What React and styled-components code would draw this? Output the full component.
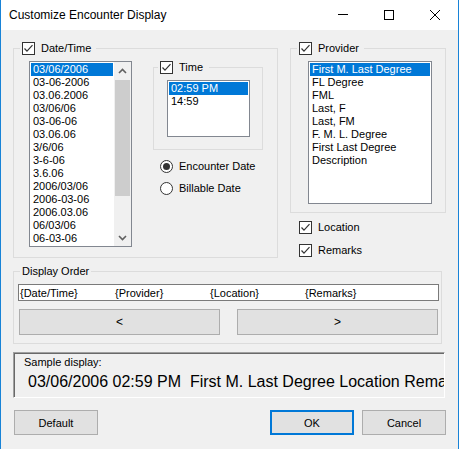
import React from "react";
import styled, { createGlobalStyle } from "styled-components";

const GlobalStyle = createGlobalStyle`
  html, body {
    margin: 0;
    padding: 0;
    background: #f0f0f0;
  }
  body {
    font-family: "Liberation Sans", Arial, sans-serif;
    font-size: 11px;
    color: #000;
  }
`;

const Window = styled.div`
  width: 459px;
  height: 449px;
  box-sizing: border-box;
  border-left: 1px solid #1883d7;
  border-right: 1px solid #1883d7;
  background: #f0f0f0;
  display: flex;
  flex-direction: column;
  overflow: hidden;
`;

const TitleBar = styled.div`
  height: 30px;
  flex-shrink: 0;
  background: #fff;
  display: flex;
  align-items: center;
`;

const Title = styled.div`
  flex: 1;
  padding-left: 8px;
  font-size: 12px;
`;

const CaptionButton = styled.div`
  width: 46px;
  height: 30px;
  display: flex;
  align-items: center;
  justify-content: center;
`;

const Body = styled.div`
  padding: 12px 12px 0 12px;
  display: flex;
  flex-direction: column;
`;

const TopRow = styled.div`
  display: flex;
  gap: 12px;
  height: 216px;
`;

const Group = styled.fieldset`
  margin: ${(p) => p.$mt || 0}px 0 0 0;
  min-width: 0;
  box-sizing: border-box;
  border: 1px solid #dcdcdc;
  width: ${(p) => p.$w}px;
  height: ${(p) => p.$h}px;
  padding: 6px 0 0 0;
`;

const Legend = styled.legend`
  margin-left: ${(p) => (p.$ml !== undefined ? p.$ml : 6)}px;
  padding: 0 ${(p) => p.$pr || 5}px 0 2px;
  height: 13px;
  line-height: 13px;
`;

const GroupInner = styled.div`
  padding-left: ${(p) => p.$pl}px;
`;

const CheckLabel = styled.span`
  display: inline-flex;
  align-items: center;
  gap: 6px;
  height: 13px;
  line-height: 13px;
  white-space: nowrap;
`;

const CheckBox = styled.span`
  width: 13px;
  height: 13px;
  box-sizing: border-box;
  border: 1px solid #333;
  background: #fff;
  display: inline-flex;
  align-items: center;
  justify-content: center;
  flex-shrink: 0;
`;

const RadioCircle = styled.span`
  width: 13px;
  height: 13px;
  box-sizing: border-box;
  border: 1px solid #333;
  border-radius: 50%;
  background: #fff;
  display: inline-flex;
  align-items: center;
  justify-content: center;
  flex-shrink: 0;
`;

const RadioDot = styled.span`
  width: 7px;
  height: 7px;
  border-radius: 50%;
  background: #333;
`;

const ListBox = styled.div`
  width: ${(p) => p.$w}px;
  height: ${(p) => p.$h}px;
  box-sizing: border-box;
  border: 1px solid #828790;
  background: #fff;
  display: flex;
  flex-shrink: 0;
  overflow: hidden;
`;

const ListItems = styled.div`
  flex: 1;
  padding: 1px;
  overflow: hidden;
`;

const ListItem = styled.div`
  height: 13px;
  line-height: 13px;
  padding-left: 2px;
  white-space: nowrap;
  background: ${(p) => (p.$sel ? "#0078d7" : "transparent")};
  color: ${(p) => (p.$sel ? "#fff" : "#000")};
`;

const ScrollBar = styled.div`
  width: 17px;
  flex-shrink: 0;
  background: #f0f0f0;
  display: flex;
  flex-direction: column;
`;

const ScrollArrow = styled.div`
  height: 17px;
  display: flex;
  align-items: center;
  justify-content: center;
`;

const ScrollTrack = styled.div`
  flex: 1;
  padding: 1px 1px 0 1px;
`;

const ScrollThumb = styled.div`
  height: 116px;
  background: #cdcdcd;
`;

const DateContent = styled.div`
  display: flex;
  padding-left: 15px;
  gap: 21px;
`;

const Column = styled.div`
  display: flex;
  flex-direction: column;
`;

const RadioList = styled.div`
  display: flex;
  flex-direction: column;
  gap: 9px;
  margin: 10px 0 0 7px;
`;

const ProviderColumn = styled.div`
  width: 156px;
  display: flex;
  flex-direction: column;
`;

const ChecksBelow = styled.div`
  display: flex;
  flex-direction: column;
  gap: 10px;
  margin: 8px 0 0 9px;
`;

const OrderField = styled.div`
  height: 17px;
  width: 421px;
  box-sizing: border-box;
  border: 1px solid #7a7a7a;
  background: #fff;
  display: flex;
  align-items: center;
  padding-left: 1px;
`;

const OrderToken = styled.span`
  width: 95px;
  flex-shrink: 0;
  white-space: nowrap;
`;

const MoveRow = styled.div`
  display: flex;
  gap: 17px;
  margin: 8px 0 0 1px;
`;

const Button = styled.div`
  box-sizing: border-box;
  width: ${(p) => p.$w}px;
  height: ${(p) => p.$h}px;
  background: #e1e1e1;
  border: ${(p) => (p.$default ? "2px solid #0078d7" : "1px solid #adadad")};
  display: flex;
  align-items: center;
  justify-content: center;
  font-size: ${(p) => p.$fs || 11}px;
`;

const SampleBox = styled.div`
  margin-top: 8px;
  width: 432px;
  height: 46px;
  box-sizing: border-box;
  border: 1px solid;
  border-color: #a0a0a0 #fff #fff #a0a0a0;
  box-shadow: inset 1px 1px 0 #696969;
  overflow: hidden;
`;

const SampleLabel = styled.div`
  margin: 3px 0 0 10px;
  line-height: 13px;
`;

const SampleText = styled.div`
  margin: 4px 0 0 14px;
  font-size: 16px;
  line-height: 18px;
  white-space: nowrap;
  overflow: hidden;
`;

const ButtonRow = styled.div`
  display: flex;
  gap: 8px;
  margin: 12px 0 0 1px;
`;

const Spacer = styled.div`
  flex: 1;
`;

const Check = ({ children }) => (
  <CheckLabel>
    <CheckBox>
      <svg width="11" height="11" viewBox="0 0 11 11">
        <path d="M1.5 5.5 L4 8.2 L9.5 2.2" fill="none" stroke="#333" strokeWidth="1.2" />
      </svg>
    </CheckBox>
    {children}
  </CheckLabel>
);

const Radio = ({ checked, children }) => (
  <CheckLabel>
    <RadioCircle>{checked && <RadioDot />}</RadioCircle>
    {children}
  </CheckLabel>
);

const Chevron = ({ up }) => (
  <svg width="9" height="6" viewBox="0 0 9 6">
    <path
      d={up ? "M1 5 L4.5 1.5 L8 5" : "M1 1 L4.5 4.5 L8 1"}
      fill="none"
      stroke="#606060"
      strokeWidth="1.6"
    />
  </svg>
);

const List = ({ items, w, h, scroll }) => (
  <ListBox $w={w} $h={h}>
    <ListItems>
      {items.map((it, i) => (
        <ListItem key={it} $sel={i === 0}>
          {it}
        </ListItem>
      ))}
    </ListItems>
    {scroll && (
      <ScrollBar>
        <ScrollArrow>
          <Chevron up />
        </ScrollArrow>
        <ScrollTrack>
          <ScrollThumb />
        </ScrollTrack>
        <ScrollArrow>
          <Chevron />
        </ScrollArrow>
      </ScrollBar>
    )}
  </ListBox>
);

const dateFormats = [
  "03/06/2006",
  "03-06-2006",
  "03.06.2006",
  "03/06/06",
  "03-06-06",
  "03.06.06",
  "3/6/06",
  "3-6-06",
  "3.6.06",
  "2006/03/06",
  "2006-03-06",
  "2006.03.06",
  "06/03/06",
  "06-03-06",
];

const timeFormats = ["02:59 PM", "14:59"];

const providerFormats = [
  "First M. Last Degree",
  "FL Degree",
  "FML",
  "Last, F",
  "Last, FM",
  "F. M. L. Degree",
  "First Last Degree",
  "Description",
];

const order = ["{Date/Time}", "{Provider}", "{Location}", "{Remarks}"];

const App = () => {
  return (
    <>
      <GlobalStyle />
      <Window>
        <TitleBar>
          <Title>Customize Encounter Display</Title>
          <CaptionButton>
            <svg width="10" height="10" viewBox="0 0 10 10">
              <line x1="0" y1="4.5" x2="10" y2="4.5" stroke="#000" strokeWidth="1" />
            </svg>
          </CaptionButton>
          <CaptionButton>
            <svg width="10" height="10" viewBox="0 0 10 10">
              <rect x="0.5" y="0.5" width="9" height="9" fill="none" stroke="#000" strokeWidth="1" />
            </svg>
          </CaptionButton>
          <CaptionButton>
            <svg width="10" height="10" viewBox="0 0 10 10">
              <path d="M0 0 L10 10 M10 0 L0 10" stroke="#000" strokeWidth="1" />
            </svg>
          </CaptionButton>
        </TitleBar>

        <Body>
          <TopRow>
            <Group $w={266} $h={216}>
              <Legend>
                <Check>Date/Time</Check>
              </Legend>
              <DateContent>
                <List items={dateFormats} w={103} h={186} scroll />
                <Column>
                  <Group $w={110} $h={89}>
                    <Legend $ml={4} $pr={6}>
                      <Check>Time</Check>
                    </Legend>
                    <GroupInner $pl={13}>
                      <List items={timeFormats} w={83} h={57} />
                    </GroupInner>
                  </Group>
                  <RadioList>
                    <Radio checked>Encounter Date</Radio>
                    <Radio>Billable Date</Radio>
                  </RadioList>
                </Column>
              </DateContent>
            </Group>

            <ProviderColumn>
              <Group $w={156} $h={171}>
                <Legend>
                  <Check>Provider</Check>
                </Legend>
                <GroupInner $pl={17}>
                  <List items={providerFormats} w={124} h={143} />
                </GroupInner>
              </Group>
              <ChecksBelow>
                <Check>Location</Check>
                <Check>Remarks</Check>
              </ChecksBelow>
            </ProviderColumn>
          </TopRow>

          <Group $w={429} $h={79} $mt={7}>
            <Legend $pr={2}>Display Order</Legend>
            <GroupInner $pl={4}>
              <OrderField>
                {order.map((o) => (
                  <OrderToken key={o}>{o}</OrderToken>
                ))}
              </OrderField>
              <MoveRow>
                <Button $w={201} $h={26} $fs={12}>&lt;</Button>
                <Button $w={201} $h={26} $fs={12}>&gt;</Button>
              </MoveRow>
            </GroupInner>
          </Group>

          <SampleBox>
            <SampleLabel>Sample display:</SampleLabel>
            <SampleText>03/06/2006 02:59 PM&nbsp; First M. Last Degree Location Remarks</SampleText>
          </SampleBox>

          <ButtonRow>
            <Button $w={84} $h={25}>Default</Button>
            <Spacer />
            <Button $w={84} $h={25} $default>OK</Button>
            <Button $w={84} $h={25}>Cancel</Button>
          </ButtonRow>
        </Body>
      </Window>
    </>
  );
};

export default App;
